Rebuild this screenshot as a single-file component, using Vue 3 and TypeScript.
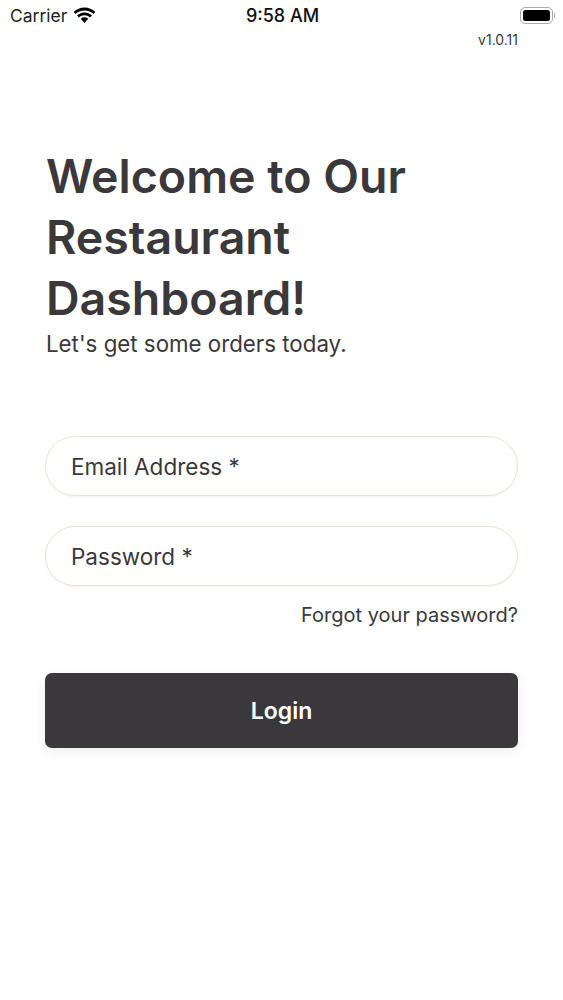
<script setup lang="ts">
const fields: string[] = ['Email Address *', 'Password *']
</script>

<template>
  <div class="page">
    <header class="status">
      <div class="status-left">
        <span class="carrier">Carrier</span>
        <svg class="wifi" width="24" height="17" viewBox="0 0 24 17" fill="#000">
          <path d="M12 3.2c3.6 0 6.9 1.4 9.4 3.7l1.9-2.1C20.3 1.900 16.300 0.200 12 0.200S3.700 1.900.7 4.800l1.900 2.100C5.100 4.600 8.400 3.200 12 3.200z" />
          <path d="M12 8.300c2.200 0 4.200.8 5.800 2.200l2-2.200C17.600 6.400 14.900 5.300 12 5.300s-5.600 1.100-7.800 3l2 2.200c1.600-1.400 3.600-2.200 5.800-2.200z" />
          <path d="M12 10.400c-1.500 0-2.800.5-3.900 1.400L12 16.200l3.900-4.400c-1.100-.9-2.400-1.400-3.900-1.400z" />
        </svg>
      </div>
      <span class="time">9:58 AM</span>
      <div class="battery-wrap">
        <div class="battery"><span class="battery-fill"></span></div>
        <span class="battery-nub"></span>
      </div>
    </header>
    <p class="version">v1.0.11</p>
    <main class="content">
      <h1 class="title">Welcome to Our Restaurant Dashboard!</h1>
      <p class="subtitle">Let's get some orders today.</p>
      <form class="form" @submit.prevent>
        <input v-for="f in fields" :key="f" class="field" :placeholder="f" />
        <a class="forgot">Forgot your password?</a>
        <button class="login" type="submit">Login</button>
      </form>
    </main>
  </div>
</template>

<style>
html, body { margin: 0; background: #fff; }
</style>

<style scoped>
.page {
  width: 563px;
  height: 1000px;
  overflow: hidden;
  background: #fff;
  box-sizing: border-box;
  font-family: Inter, "Liberation Sans", sans-serif;
  color: #3a383b;
}
.status {
  height: 31px;
  display: grid;
  grid-template-columns: 1fr auto 1fr;
  align-items: center;
  padding: 0 8px 0 10px;
  color: #111;
}
.status-left { display: flex; align-items: center; gap: 6px; }
.carrier { font-size: 17.500px; color: #222; }
.wifi { display: block; width: 23px; height: 17px; }
.time { font-size: 18px; font-weight: 500; }
.battery-wrap { justify-self: end; display: flex; align-items: center; gap: 1px; }
.battery {
  width: 33px;
  height: 17px;
  padding: 2px;
  box-sizing: border-box;
  border: 1.500px solid #aaa;
  border-radius: 5px;
}
.battery-fill { display: block; height: 100%; background: #000; border-radius: 2.500px; }
.battery-nub { width: 1.500px; height: 5px; background: #aaa; border-radius: 1px; }
.version {
  margin: 0;
  padding-right: 45px;
  text-align: right;
  font-size: 14px;
  line-height: 18px;
  color: #3a383b;
}
.content { padding: 97px 45px 0 46px; }
.title {
  margin: 0;
  font-size: 46.500px;
  line-height: 61px;
  font-weight: 600;
  max-width: 430px;
}
.subtitle { margin: 0; font-size: 22.300px; line-height: 30px; }
.form { display: flex; flex-direction: column; margin-top: 77px; margin-left: -1px; }
.field {
  height: 60px;
  box-sizing: border-box;
  margin-bottom: 30px;
  padding: 0 25px;
  border: 1px solid #ebe4d4;
  border-radius: 30px;
  background: #fff;
  font: 400 22.500px Inter, sans-serif;
  box-shadow: 0 1px 2px rgba(0, 0, 0, 0.05);
  outline: none;
}
.field::placeholder { color: #3a383b; opacity: 1; }
.field:nth-of-type(2) { margin-bottom: 0; }
.forgot { align-self: flex-end; margin-top: 16px; font-size: 20px; line-height: 26px; }
.login {
  margin-top: 45px;
  height: 75px;
  border: 0;
  border-radius: 7px;
  background: #3a383b;
  color: #fff;
  font: 600 23px Inter, sans-serif;
  box-shadow: 0 3px 12px rgba(0, 0, 0, 0.08);
}
</style>
